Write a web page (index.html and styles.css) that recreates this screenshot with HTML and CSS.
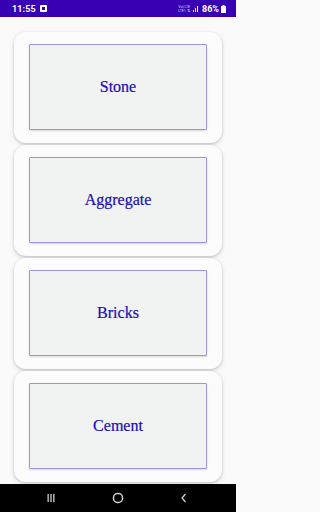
FILE: index.html
```html
<!DOCTYPE html>
<html>
<head>
<meta charset="utf-8">
<link rel="stylesheet" href="styles.css">
</head>
<body>
<div class="screen">
  <div class="status">
    <div class="status-left">
      <span class="time">11:55</span>
      <svg class="notif" width="7" height="7" viewBox="0 0 7 7"><rect x="0" y="0" width="7" height="7" rx="1" fill="#fff"/><rect x="2" y="2" width="3" height="3" fill="#3700b3"/></svg>
    </div>
    <div class="status-right">
      <span class="net"><span>Vo) LTE</span><span>LTE1 ⇅</span></span>
      <svg class="signal" width="7" height="7" viewBox="0 0 7 7"><rect x="0" y="5" width="1" height="2" fill="#ddd"/><rect x="2" y="3" width="1" height="4" fill="#ddd"/><rect x="4" y="1" width="1" height="6" fill="#fff"/></svg>
      <span class="batt-text">86%</span>
      <svg class="battery" width="5" height="8" viewBox="0 0 5 8"><rect x="1.5" y="0" width="2" height="1" fill="#fff"/><rect x="0" y="1" width="5" height="7" fill="#fff"/></svg>
    </div>
  </div>
  <div class="list">
    <div class="card"><div class="box">Stone</div></div>
    <div class="card"><div class="box">Aggregate</div></div>
    <div class="card"><div class="box">Bricks</div></div>
    <div class="card"><div class="box">Cement</div></div>
  </div>
  <div class="nav">
    <svg width="10" height="10" viewBox="0 0 10 10"><rect x="1.5" y="1" width="1.3" height="8" fill="#cfcfcf"/><rect x="4.35" y="1" width="1.3" height="8" fill="#cfcfcf"/><rect x="7.2" y="1" width="1.3" height="8" fill="#cfcfcf"/></svg>
    <svg width="12" height="12" viewBox="0 0 12 12"><rect x="1.5" y="1.5" width="9" height="9" rx="4" fill="none" stroke="#cfcfcf" stroke-width="1.5"/></svg>
    <svg width="10" height="10" viewBox="0 0 10 10"><path d="M6.5 1 L3 5 L6.5 9" fill="none" stroke="#cfcfcf" stroke-width="1.3"/></svg>
  </div>
</div>
</body>
</html>
```
FILE: styles.css
```css
html, body {
  margin: 0;
  padding: 0;
  background: #fafafa;
}
body {
  font-family: "Liberation Serif", "DejaVu Serif", serif;
}
.screen {
  width: 236px;
  height: 512px;
  display: flex;
  flex-direction: column;
  overflow: hidden;
  background: #fafafa;
}
.status {
  height: 17px;
  flex: none;
  background: #3700b3;
  display: flex;
  align-items: center;
  justify-content: space-between;
  padding: 0 10px 0 12px;
  color: #fff;
  font-family: Roboto, "Liberation Sans", sans-serif;
}
.status-left {
  display: flex;
  align-items: center;
  gap: 4px;
}
.time {
  font-size: 9px;
  font-weight: 700;
  letter-spacing: 0.1px;
}
.status-right {
  display: flex;
  align-items: center;
  gap: 2px;
}
.net {
  display: flex;
  flex-direction: column;
  font-size: 3.5px;
  line-height: 4px;
  color: #ddd;
  margin-right: 1px;
}
.batt-text {
  font-size: 9px;
  font-weight: 700;
}
.list {
  flex: 1;
  padding-top: 15px;
  display: flex;
  flex-direction: column;
  gap: 2px;
}
.card {
  flex: none;
  height: 111px;
  margin: 0 14px;
  box-sizing: border-box;
  padding: 12px 15px 13px;
  background: #fcfcfc;
  border-radius: 12px;
  box-shadow: 0 1px 3px rgba(0,0,0,0.18), 0 2px 6px rgba(0,0,0,0.08);
}
.box {
  height: 86px;
  box-sizing: border-box;
  border: 1px solid #a194dc;
  border-radius: 1px;
  background: #f1f2f2;
  box-shadow: 0 1px 2px rgba(0,0,0,0.15);
  display: flex;
  align-items: center;
  justify-content: center;
  color: #1c0db4;
  font-size: 16px;
  -webkit-text-stroke: 0.2px #1c0db4;
}
.nav {
  height: 28px;
  flex: none;
  background: #000;
  display: flex;
  align-items: center;
  justify-content: space-between;
  padding: 0 47px 0 46px;
}
```
